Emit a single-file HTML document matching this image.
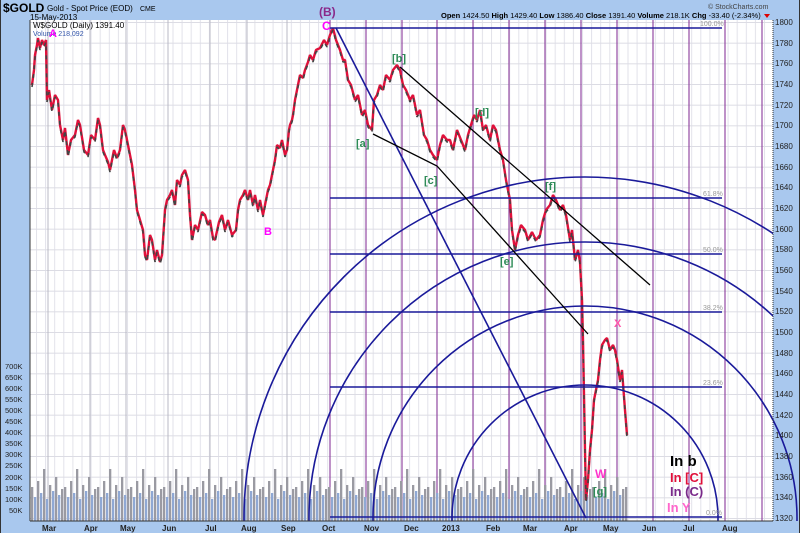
<!DOCTYPE html>
<html><head><meta charset="utf-8"><style>
html,body{margin:0;padding:0;background:#a9c8ee;overflow:hidden;width:800px;height:533px;}
body{font-family:"Liberation Sans",sans-serif;}
svg{display:block;}
</style></head><body>
<svg width="800" height="533" xmlns="http://www.w3.org/2000/svg" font-family="Liberation Sans, sans-serif">
<defs>
<pattern id="hg" patternUnits="userSpaceOnUse" x="0" y="22" width="800" height="20.667"><line x1="0" y1="0.5" x2="800" y2="0.5" stroke="#dcdce4" stroke-width="1"/></pattern>
<pattern id="vg" patternUnits="userSpaceOnUse" x="36" y="0" width="9.1" height="600"><line x1="0.5" y1="0" x2="0.5" y2="600" stroke="#e2e2ea" stroke-width="1"/></pattern>
<pattern id="vb" patternUnits="userSpaceOnUse" x="31" y="441" width="33" height="80">
<rect x="0" y="46" width="2.3" height="34" fill="#9a9aa2"/>
<rect x="3" y="56" width="2.3" height="24" fill="#8fa8d4"/>
<rect x="6" y="40" width="2.3" height="40" fill="#9a9aa2"/>
<rect x="9" y="52" width="2.3" height="28" fill="#8fa8d4"/>
<rect x="12" y="28" width="2.3" height="52" fill="#9a9aa2"/>
<rect x="15" y="58" width="2.3" height="22" fill="#8fa8d4"/>
<rect x="18" y="44" width="2.3" height="36" fill="#9a9aa2"/>
<rect x="21" y="50" width="2.3" height="30" fill="#8fa8d4"/>
<rect x="24" y="36" width="2.3" height="44" fill="#9a9aa2"/>
<rect x="27" y="54" width="2.3" height="26" fill="#8fa8d4"/>
<rect x="30" y="48" width="2.3" height="32" fill="#9a9aa2"/>
</pattern>
<clipPath id="plot"><rect x="30" y="20" width="743" height="501"/></clipPath>
<clipPath id="cr"><rect x="30" y="20" width="770" height="501"/></clipPath>
</defs>
<rect x="0" y="0" width="800" height="533" fill="#a9c8ee"/>
<rect x="30" y="20" width="743" height="501" fill="#ffffff"/>
<rect x="30" y="20" width="743" height="501" fill="url(#vg)"/>
<rect x="30" y="20" width="743" height="501" fill="url(#hg)"/>
<g stroke="#b8b8c4" stroke-width="1">
<line x1="48" y1="20" x2="48" y2="521"/><line x1="90" y1="20" x2="90" y2="521"/><line x1="126" y1="20" x2="126" y2="521"/><line x1="168" y1="20" x2="168" y2="521"/><line x1="210" y1="20" x2="210" y2="521"/><line x1="247" y1="20" x2="247" y2="521"/><line x1="287" y1="20" x2="287" y2="521"/>
</g>
<g stroke="#8a3a9a" stroke-width="1.1">
<line x1="330" y1="20" x2="330" y2="521"/><line x1="366" y1="20" x2="366" y2="521"/><line x1="402" y1="20" x2="402" y2="521"/><line x1="437" y1="20" x2="437" y2="521"/><line x1="473" y1="20" x2="473" y2="521"/><line x1="509" y1="20" x2="509" y2="521"/><line x1="545" y1="20" x2="545" y2="521"/><line x1="581" y1="20" x2="581" y2="521"/><line x1="617" y1="20" x2="617" y2="521"/><line x1="653" y1="20" x2="653" y2="521"/><line x1="689" y1="20" x2="689" y2="521"/><line x1="725" y1="20" x2="725" y2="521"/><line x1="762" y1="20" x2="762" y2="521"/>
</g>
<rect x="31" y="441" width="597" height="80" fill="url(#vb)"/>
<polyline fill="none" stroke="#e0103a" stroke-width="2.4" stroke-linejoin="bevel" points="32,85 34,70 35,55 37,45 38,38 40,48 42,40 44,45 46,40 47,100 49,90 52,110 55,95 58,100 60,125 63,140 65,128 68,155 71,140 75,135 78,120 80,125 84,150 88,155 91,135 95,140 98,118 100,125 103,150 105,155 108,162 110,170 114,150 117,158 120,150 123,125 125,130 129,150 132,165 135,190 137,210 140,220 143,230 145,255 147,260 150,235 152,240 155,260 157,250 160,262 162,255 165,210 167,200 170,195 172,190 175,205 177,180 180,185 182,175 185,170 188,180 190,215 192,240 195,225 198,230 202,212 205,215 208,225 210,220 213,238 215,240 219,222 222,215 225,230 228,220 232,235 236,230 238,210 240,200 243,195 245,190 248,200 250,190 253,205 255,195 258,210 260,200 263,215 265,205 268,190 270,185 273,170 275,160 277,145 280,148 282,140 285,155 287,150 289,130 290,125 292,120 293,115 295,100 297,90 299,80 300,75 303,78 305,70 308,62 310,55 313,60 316,50 320,48 324,40 327,45 330,35 333,28 336,40 340,50 343,60 345,60 348,80 351,85 355,100 358,95 362,115 365,110 368,125 372,130 374,100 377,95 380,85 383,90 386,75 390,80 393,70 397,65 400,70 403,85 406,90 410,100 413,95 417,115 420,110 424,135 427,140 430,150 433,155 437,160 440,145 443,135 447,140 450,140 453,150 457,130 461,140 465,150 468,135 471,125 474,115 477,120 480,110 483,130 486,125 490,140 493,125 496,130 500,150 503,160 506,180 510,200 512,230 515,250 518,235 521,225 525,230 528,240 532,232 536,240 540,235 543,220 546,210 550,205 553,195 556,200 560,210 563,205 566,215 570,240 572,230 575,260 578,250 580,262 582,300 583,340 585,450 586,500 588,480 590,450 592,430 594,400 596,390 598,380 600,360 602,345 605,340 607,338 610,350 613,345 615,350 617,360 620,380 622,370 625,410 627,435"/>
<polyline fill="none" stroke="#444" stroke-width="1.6" stroke-dasharray="4,5" stroke-linejoin="bevel" transform="translate(0,2)" points="32,85 34,70 35,55 37,45 38,38 40,48 42,40 44,45 46,40 47,100 49,90 52,110 55,95 58,100 60,125 63,140 65,128 68,155 71,140 75,135 78,120 80,125 84,150 88,155 91,135 95,140 98,118 100,125 103,150 105,155 108,162 110,170 114,150 117,158 120,150 123,125 125,130 129,150 132,165 135,190 137,210 140,220 143,230 145,255 147,260 150,235 152,240 155,260 157,250 160,262 162,255 165,210 167,200 170,195 172,190 175,205 177,180 180,185 182,175 185,170 188,180 190,215 192,240 195,225 198,230 202,212 205,215 208,225 210,220 213,238 215,240 219,222 222,215 225,230 228,220 232,235 236,230 238,210 240,200 243,195 245,190 248,200 250,190 253,205 255,195 258,210 260,200 263,215 265,205 268,190 270,185 273,170 275,160 277,145 280,148 282,140 285,155 287,150 289,130 290,125 292,120 293,115 295,100 297,90 299,80 300,75 303,78 305,70 308,62 310,55 313,60 316,50 320,48 324,40 327,45 330,35 333,28 336,40 340,50 343,60 345,60 348,80 351,85 355,100 358,95 362,115 365,110 368,125 372,130 374,100 377,95 380,85 383,90 386,75 390,80 393,70 397,65 400,70 403,85 406,90 410,100 413,95 417,115 420,110 424,135 427,140 430,150 433,155 437,160 440,145 443,135 447,140 450,140 453,150 457,130 461,140 465,150 468,135 471,125 474,115 477,120 480,110 483,130 486,125 490,140 493,125 496,130 500,150 503,160 506,180 510,200 512,230 515,250 518,235 521,225 525,230 528,240 532,232 536,240 540,235 543,220 546,210 550,205 553,195 556,200 560,210 563,205 566,215 570,240 572,230 575,260 578,250 580,262 582,300 583,340 585,450 586,500 588,480 590,450 592,430 594,400 596,390 598,380 600,360 602,345 605,340 607,338 610,350 613,345 615,350 617,360 620,380 622,370 625,410 627,435"/>
<g fill="none" stroke="#1a1a9a" stroke-width="1.6" clip-path="url(#plot)">
<circle cx="585" cy="518" r="341"/>
<circle cx="585" cy="518" r="276"/>
<circle cx="585" cy="518" r="133"/>
</g>
<g fill="none" stroke="#1a1a9a" stroke-width="1.6" clip-path="url(#cr)">
<circle cx="585" cy="518" r="212"/>
</g>
<g fill="none" stroke="#1a1a9a" stroke-width="1.6">
<line x1="330" y1="28" x2="722" y2="28"/>
<line x1="330" y1="198" x2="722" y2="198"/>
<line x1="330" y1="254" x2="722" y2="254"/>
<line x1="330" y1="312" x2="722" y2="312"/>
<line x1="330" y1="387" x2="722" y2="387"/>
<line x1="330" y1="517" x2="722" y2="517"/>
<line x1="336" y1="28" x2="586" y2="518"/>
</g>
<g stroke="#000" stroke-width="1.3" fill="none">
<line x1="400" y1="67" x2="650" y2="285"/>
<polyline points="373,134 437,166 588,334"/>
</g>
<line x1="773" y1="20" x2="773" y2="521" stroke="#333" stroke-width="1" stroke-dasharray="1,1"/>
<line x1="30" y1="20" x2="30" y2="521" stroke="#333" stroke-width="1"/>
<line x1="30" y1="521" x2="773" y2="521" stroke="#333" stroke-width="1"/>
<line x1="0.5" y1="0" x2="0.5" y2="533" stroke="#333"/>
<line x1="799.5" y1="0" x2="799.5" y2="533" stroke="#333"/>
<g font-size="8" fill="#222">
<text x="775" y="25">1800</text><text x="775" y="46">1780</text><text x="775" y="66">1760</text><text x="775" y="87">1740</text><text x="775" y="108">1720</text><text x="775" y="128">1700</text><text x="775" y="149">1680</text><text x="775" y="170">1660</text><text x="775" y="190">1640</text><text x="775" y="211">1620</text><text x="775" y="232">1600</text><text x="775" y="252">1580</text><text x="775" y="273">1560</text><text x="775" y="294">1540</text><text x="775" y="314">1520</text><text x="775" y="335">1500</text><text x="775" y="356">1480</text><text x="775" y="376">1460</text><text x="775" y="397">1440</text><text x="775" y="418">1420</text><text x="775" y="438">1400</text><text x="775" y="459">1380</text><text x="775" y="480">1360</text><text x="775" y="500">1340</text><text x="775" y="521">1320</text>
</g>
<g font-size="7.5" fill="#222">
<text x="5" y="369">700K</text><text x="5" y="380">650K</text><text x="5" y="391">600K</text><text x="5" y="402">550K</text><text x="5" y="413">500K</text><text x="5" y="424">450K</text><text x="5" y="435">400K</text><text x="5" y="446">350K</text><text x="5" y="457">300K</text><text x="5" y="468">250K</text><text x="5" y="480">200K</text><text x="5" y="491">150K</text><text x="5" y="502">100K</text><text x="9" y="513">50K</text>
</g>
<g font-size="8" font-weight="bold" fill="#222">
<text x="42" y="531">Mar</text><text x="84" y="531">Apr</text><text x="120" y="531">May</text><text x="162" y="531">Jun</text><text x="205" y="531">Jul</text><text x="241" y="531">Aug</text><text x="281" y="531">Sep</text><text x="322" y="531">Oct</text><text x="364" y="531">Nov</text><text x="404" y="531">Dec</text><text x="442" y="531">2013</text><text x="486" y="531">Feb</text><text x="523" y="531">Mar</text><text x="564" y="531">Apr</text><text x="603" y="531">May</text><text x="642" y="531">Jun</text><text x="683" y="531">Jul</text><text x="722" y="531">Aug</text>
</g>
<g font-size="7" fill="#999">
<text x="700" y="26">100.0%</text><text x="703" y="196">61.8%</text><text x="703" y="252">50.0%</text><text x="703" y="310">38.2%</text><text x="703" y="385">23.6%</text><text x="706" y="515">0.0%</text>
</g>
<text x="3" y="12" font-size="12" font-weight="bold" fill="#000">$GOLD</text>
<text x="47" y="11" font-size="8" fill="#000">Gold - Spot Price (EOD)</text><text x="140" y="11" font-size="7" fill="#000">CME</text>
<text x="30" y="20" font-size="8" fill="#000">15-May-2013</text>
<text x="708" y="9" font-size="7" fill="#444">© StockCharts.com</text>
<text x="441" y="18" font-size="7.5" fill="#000"><tspan font-weight="bold">Open</tspan> 1424.50 <tspan font-weight="bold">High</tspan> 1429.40 <tspan font-weight="bold">Low</tspan> 1386.40 <tspan font-weight="bold">Close</tspan> 1391.40 <tspan font-weight="bold">Volume</tspan> 218.1K <tspan font-weight="bold">Chg</tspan> -33.40 (-2.34%)</text>
<polygon points="764,14 770,14 767,18" fill="#d00"/>
<text x="33" y="28" font-size="8" fill="#000">W$GOLD (Daily) 1391.40</text>
<text x="33" y="36" font-size="7" fill="#3355aa">Volume 218,092</text>
<g font-weight="bold">
<text x="319" y="16" font-size="12" fill="#8a2a8a">(B)</text>
<text x="322" y="30" font-size="12" fill="#f0f">C</text>
<text x="49" y="37" font-size="11" fill="#f0f">A</text>
<text x="264" y="235" font-size="11" fill="#f0f">B</text>
<g font-size="11" fill="#2e8b57">
<text x="392" y="62">[b]</text><text x="356" y="147">[a]</text><text x="424" y="184">[c]</text><text x="475" y="116">[d]</text><text x="545" y="190">[f]</text><text x="500" y="265">[e]</text><text x="593" y="495">[g]</text>
</g>
<text x="614" y="327" font-size="11" fill="#ff55aa">X</text>
<text x="595" y="478" font-size="12" fill="#ff33cc">W</text>
<text x="670" y="466" font-size="15" fill="#000">In b</text>
<text x="670" y="482" font-size="13" fill="#e0103a">In [C]</text>
<text x="670" y="496" font-size="13" fill="#7a2a8a">In (C)</text>
<text x="667" y="512" font-size="13" fill="#ff66cc">In Y</text>
</g>
</svg>
</body></html>
